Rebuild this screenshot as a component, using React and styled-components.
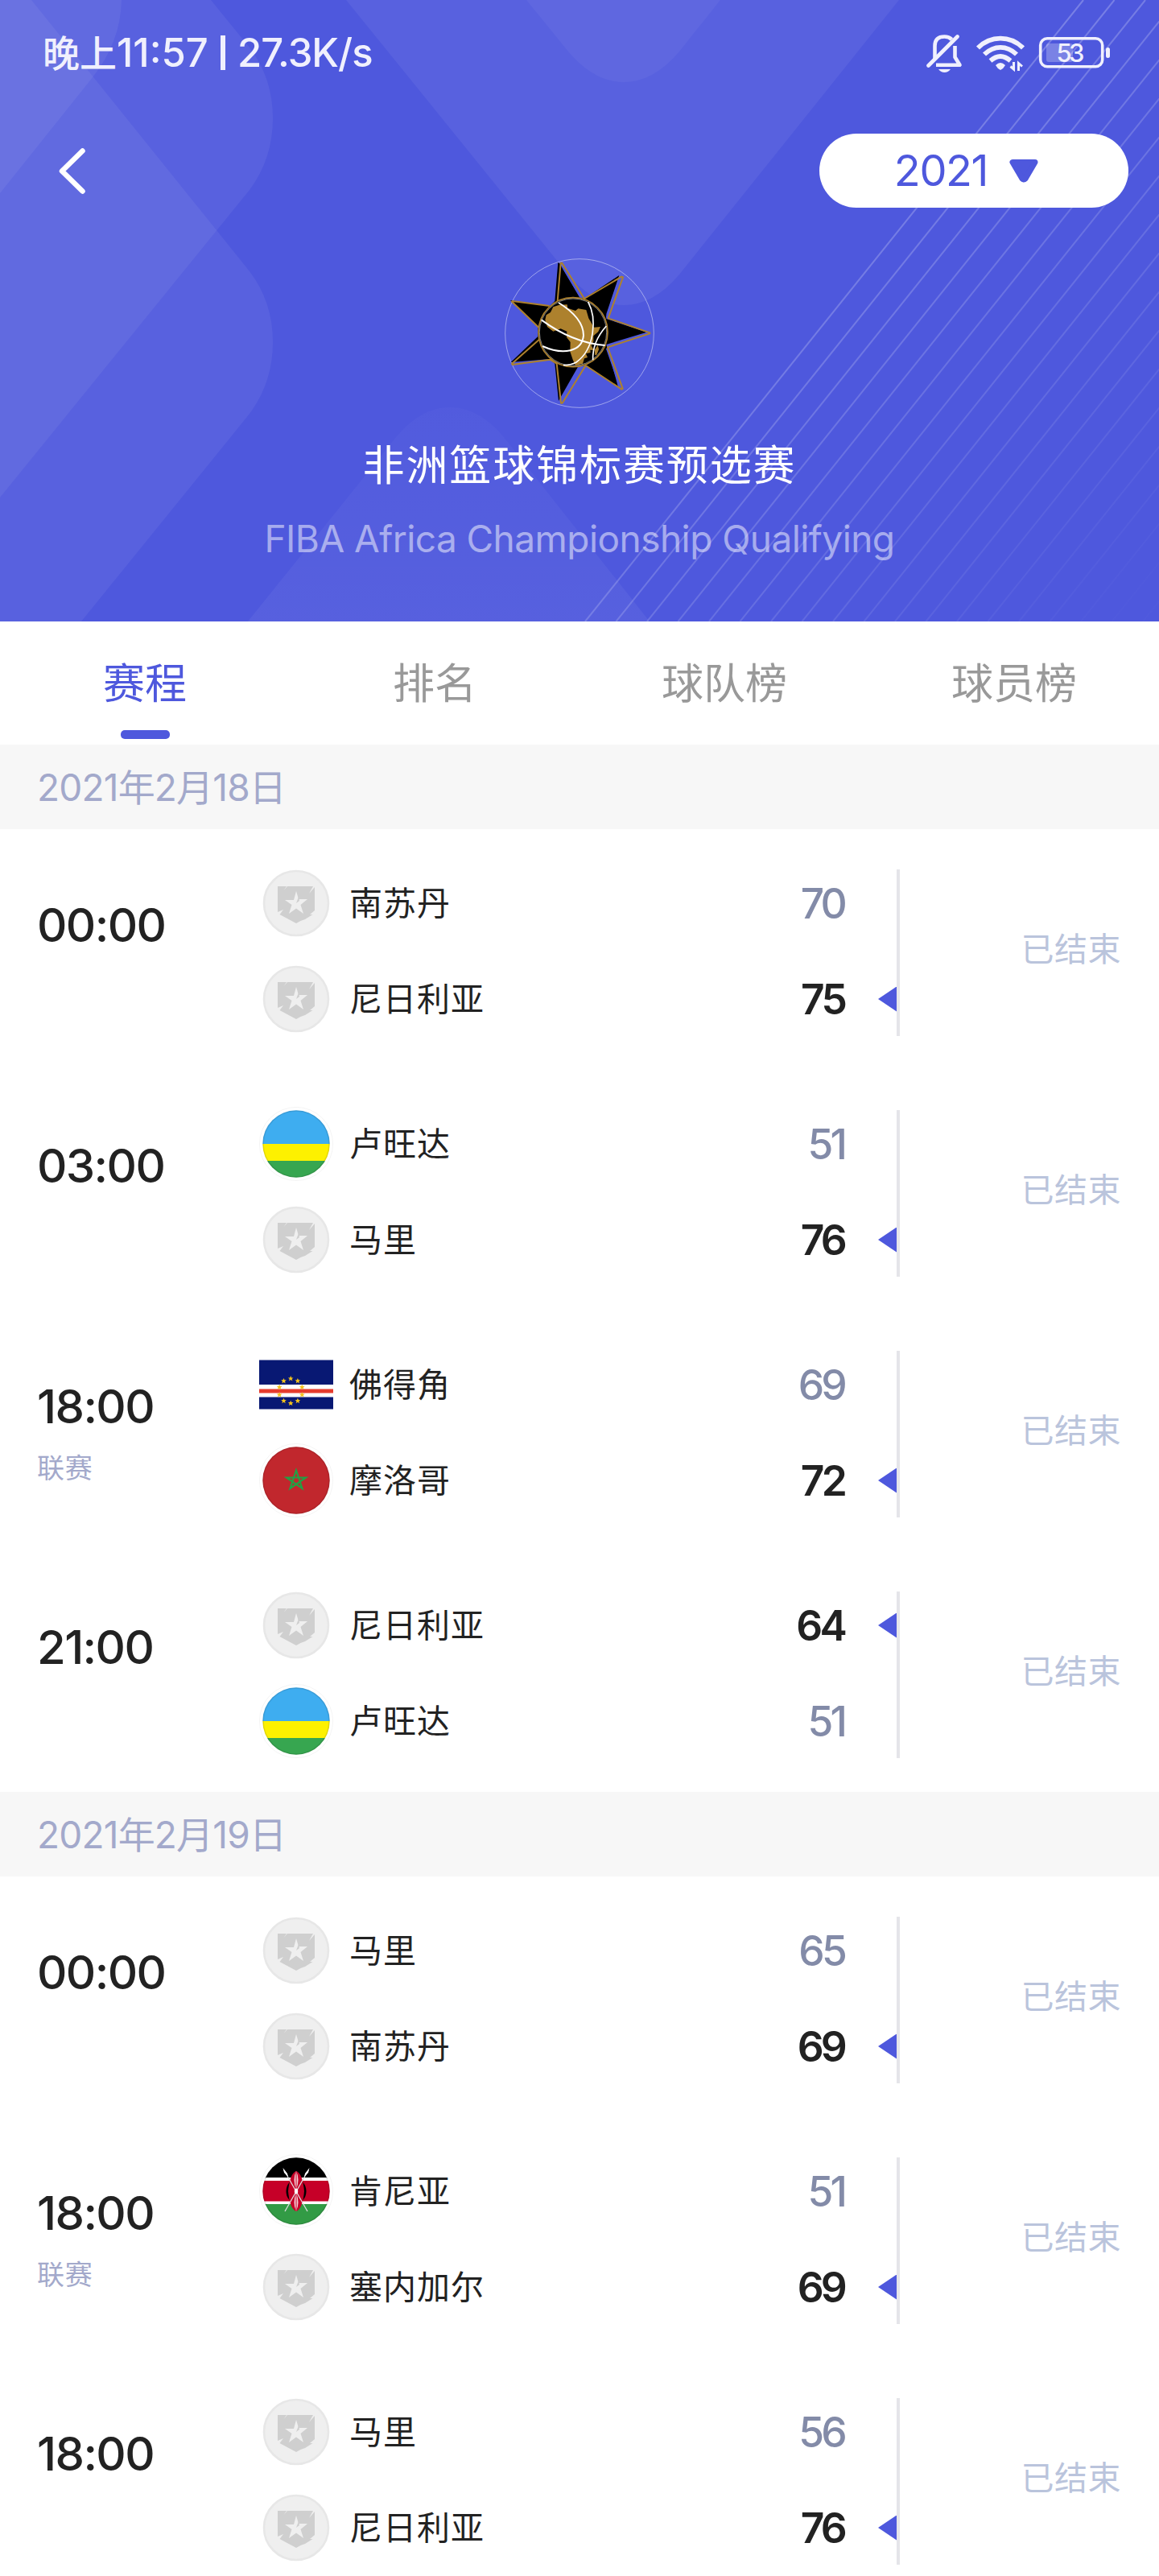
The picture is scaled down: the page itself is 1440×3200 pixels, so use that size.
import React from "react";
import styled, { createGlobalStyle } from "styled-components";

const GlobalStyle = createGlobalStyle`
  * { box-sizing: border-box; }
  body {
    margin: 0;
    background: #fff;
    font-family: Inter, "Noto Sans CJK SC", sans-serif;
    color: #222;
  }
`;

const Page = styled.div`
  width: 1440px;
  height: 3200px;
  overflow: hidden;
  background: #fff;
`;

const Header = styled.header`
  position: relative;
  height: 772px;
  background: #4e58dd;
  display: flex;
  flex-direction: column;
  overflow: hidden;
  isolation: isolate;
`;

const Backdrop = styled.svg`
  position: absolute;
  inset: 0;
  z-index: -1;
`;

const StatusBar = styled.div`
  height: 131px;
  padding: 0 61px 0 53px;
  display: flex;
  align-items: center;
  justify-content: space-between;
  color: #f0f0fd;
`;

const Clock = styled.span`
  font-size: 49px;
  font-weight: 500;
  line-height: 60px;
  white-space: nowrap;
  word-spacing: -2.5px;
`;

const CjkPart = styled.span`
  font-size: 46px;
`;

const Divider = styled.span`
  display: inline-block;
  width: 6px;
  height: 43px;
  margin: 0 4px 0 5px;
  vertical-align: -4px;
  overflow: hidden;
  background: #f0f0fd;
  color: transparent;
`;

const Speed = styled.span`
  letter-spacing: -1px;
`;

const StatusIcons = styled.div`
  display: flex;
  align-items: center;
`;

const NavBar = styled.div`
  height: 162px;
  padding: 0 38px 0 66px;
  display: flex;
  align-items: center;
  justify-content: space-between;
`;

const BackButton = styled.button`
  border: 0;
  padding: 0;
  background: none;
  display: flex;
`;

const SeasonButton = styled.button`
  width: 384px;
  height: 92px;
  border: 0;
  border-radius: 46px;
  padding: 0 18px 0 0;
  background: #fff;
  color: #4e58dd;
  display: flex;
  align-items: center;
  justify-content: center;
  gap: 26px;
  font: 400 54px/92px Inter, sans-serif;
  letter-spacing: -1.4px;
`;

const Competition = styled.div`
  display: flex;
  flex-direction: column;
  align-items: center;
  padding-top: 27px;
`;

const CompetitionName = styled.h1`
  margin: 33px 0 0;
  font-size: 52px;
  font-weight: 400;
  line-height: 76px;
  letter-spacing: 1.9px;
  color: #fff;
`;

const CompetitionSub = styled.div`
  margin-top: 19px;
  font-size: 46px;
  line-height: 66px;
  letter-spacing: -0.55px;
  color: rgba(255, 255, 255, 0.5);
  white-space: nowrap;
`;

const Tabs = styled.nav`
  height: 153px;
  display: grid;
  grid-template-columns: repeat(4, 1fr);
`;

const Tab = styled.div`
  display: flex;
  flex-direction: column;
  align-items: center;
  padding-top: 41px;
  font-size: 52px;
  line-height: 74px;
  color: ${(p) => (p.$active ? "#4e58dd" : "#999")};

  &::after {
    content: "";
    display: ${(p) => (p.$active ? "block" : "none")};
    width: 61px;
    height: 11px;
    margin-top: 20px;
    border-radius: 5px;
    background: #4e58dd;
  }
`;

const DateBar = styled.div`
  height: 105px;
  padding-left: 46px;
  display: flex;
  align-items: center;
  background: #f7f7f7;
  color: #a3a9cb;
  font-size: 46px;
  line-height: 60px;
  letter-spacing: -0.8px;
`;

const Match = styled.article`
  height: 299px;
  padding: 50px 47px 42px 46px;
  display: flex;
`;

const Kickoff = styled.div`
  width: 276px;
  padding-top: 34px;
`;

const Time = styled.div`
  font-size: 58px;
  font-weight: 500;
  line-height: 70px;
  letter-spacing: -1.6px;
`;

const Stage = styled.div`
  margin-top: 17px;
  font-size: 34px;
  line-height: 50px;
  letter-spacing: 0.8px;
  color: #a3a9cb;
`;

const Teams = styled.div`
  width: 796px;
  height: 207px;
  border-right: 4px solid #e5e5e9;
  display: flex;
  flex-direction: column;
  gap: 27px;
`;

const Team = styled.div`
  height: 92px;
  margin-top: ${(p) => (p.$first ? -4 : 0)}px;
  display: flex;
  align-items: center;
`;

const TeamName = styled.span`
  margin-left: 20px;
  flex: 1;
  font-size: 41px;
  line-height: 60px;
  letter-spacing: 1px;
`;

const Score = styled.span`
  font-size: 51.5px;
  font-weight: ${(p) => (p.$won ? 600 : 500)};
  line-height: 60px;
  letter-spacing: -3.8px;
  color: ${(p) => (p.$won ? "#222" : "#838ba8")};
`;

const Marker = styled.span`
  width: 23px;
  height: 31px;
  margin-left: 42px;
  background: ${(p) => (p.$won ? "#4e58dd" : "transparent")};
  clip-path: polygon(100% 0, 100% 100%, 0 50%);
`;

const State = styled.div`
  flex: 1;
  padding-top: 69px;
  text-align: right;
  font-size: 41px;
  line-height: 60px;
  letter-spacing: 0.5px;
  color: #bac4dc;
`;

const STRIPES = Array.from({ length: 20 }, (_, i) => 1346 + i * 38.5);

function HeaderBackdrop() {
  return (
    <Backdrop width="1440" height="772" viewBox="0 0 1440 772">
      <defs>
        <linearGradient id="fade" gradientUnits="userSpaceOnUse" x1="1010" y1="330" x2="1400" y2="740">
          <stop offset="0" stopColor="#fff" stopOpacity="0.24" />
          <stop offset="0.5" stopColor="#fff" stopOpacity="0.12" />
          <stop offset="1" stopColor="#fff" stopOpacity="0.01" />
        </linearGradient>
        <linearGradient id="rise" x1="0" y1="0" x2="0" y2="1">
          <stop offset="0" stopColor="#fff" stopOpacity="0.02" />
          <stop offset="1" stopColor="#fff" stopOpacity="0.05" />
        </linearGradient>
      </defs>
      <g fill="#fff" fillOpacity="0.06">
        <path d="M0 0H262L310 59Q339 97 339 147T310 236L0 618Z" />
        <path d="M0 -48L39 0L310 337Q339 375 339 425T310 514L101 772H0Z" />
        <path d="M0 0H151Q150 52 115 96L0 240Z" />
        <path d="M430 0H1117L844 341Q812 379 775 379T706 341Z" />
        <path d="M654 0H895L844 64Q812 102 775 102T706 64Z" fillOpacity="0.045" />
      </g>
      <path d="M308 772L489 547Q521 506 559 506T629 547L807 772Z" fill="url(#rise)" />
      <g stroke="url(#fade)" strokeWidth="2">
        {STRIPES.map((x) => (
          <path key={x} d={`M${x} 0L${x - 619} 772`} />
        ))}
      </g>
    </Backdrop>
  );
}

function StatusGlyphs() {
  return (
    <svg width="228" height="60" viewBox="1151 35 228 60" fill="none" stroke="#f0f0fd">
      <g strokeWidth="4.6">
        <path d="M1161.500 72V56Q1161.500 44.500 1173.500 44.500Q1179 44.500 1182.500 48" />
        <path d="M1186.500 56V70L1192.500 79.700H1163" strokeLinejoin="round" />
        <path d="M1153.500 80.500L1189.500 44.500" strokeLinecap="round" />
      </g>
      <path d="M1166 85H1181Q1178 89 1173.500 89T1166 85Z" fill="#f0f0fd" stroke="none" />
      <g strokeWidth="5.800">
        <path d="M1215 58.500Q1227 46.700 1243 46.700T1271 58.500" />
        <path d="M1223 66.500Q1232 57.800 1243 57.800T1263 66.500" />
        <path d="M1230.500 74.500Q1237 69 1243 69T1255.500 74.500" />
      </g>
      <path d="M1237 80Q1243 74 1249 80Q1247 84 1243 86Q1239 84 1237 80Z" fill="#f0f0fd" stroke="none" />
      <path d="M1259.500 76V85L1255.500 81.500M1265.500 87V77.500L1270 81.500" strokeWidth="3" />
      <rect x="1292.700" y="46.700" width="77" height="35" rx="8.500" strokeWidth="3.600" />
      <rect x="1300" y="53" width="33" height="23" rx="3" fill="#fff" fillOpacity="0.25" stroke="none" />
      <rect x="1374" y="58" width="5" height="13" rx="2.500" fill="#f0f0fd" stroke="none" />
      <text x="1330" y="75.500" textAnchor="middle" textLength="35" fontFamily="Inter, sans-serif" fontSize="31" fontWeight="500" fill="#f0f0fd" stroke="none">53</text>
    </svg>
  );
}

function CompetitionLogo() {
  return (
    <svg width="188" height="188" viewBox="78 60 564 564">
      <circle cx="360" cy="342" r="277" fill="none" stroke="#fff" strokeOpacity="0.45" strokeWidth="3" />
      <path
        fill="#000"
        d="M280 78L286 82L360 208L378 213L508 126L460 270V288L610 338L460 384L504 542L383 462L355 466L282 594L268 455L250 438L104 450L205 354V318L102 219L250 240L268 222Z"
      />
      <path
        fill="none"
        stroke="#4e58dd"
        strokeWidth="7"
        d="M298 96L366 208M510 140L462 284M462 398L512 542M372 468L296 590M250 446L124 458"
      />
      <path
        fill="none"
        stroke="#ad812d"
        strokeWidth="6"
        strokeLinejoin="round"
        d="M278 222L290 80H295L378 213L517 131L522 133L467 286L622 340V343L465 394L521 548L517 551L383 462L296 602H291L275 455L250 440L110 459L108 455L210 365M208 320L108 224L110 222L248 240"
      />
      <circle cx="336" cy="338" r="129" fill="#000" stroke="#ad812d" strokeWidth="5" />
      <circle cx="336" cy="338" r="125" fill="none" stroke="#fff" strokeWidth="1.500" />
      <path
        fill="#ad812d"
        d="M232 292L236 274L252 264L262 244L285 236L314 235L316 248L345 258L355 250L385 255L394 286L414 320L438 318L430 336L412 352L412 372L404 388L413 405L400 404L401 414L384 418L390 432L378 436L372 455L345 462L335 440L325 410L326 375L312 357L313 335L290 325L262 335L240 318Z"
      />
      <path fill="#ad812d" d="M428 386L432 402L424 422L418 424L416 404Z" />
      <g fill="none" stroke="#fff" strokeWidth="6">
        <path d="M282 228C350 270 375 310 375 350C370 410 300 425 222 390" />
        <path d="M218 292C290 345 370 380 455 387" />
        <path d="M392 225C425 285 418 400 348 450Q325 462 300 461" strokeWidth="5" />
        <path d="M460 315C420 360 408 400 410 442" strokeWidth="5" />
      </g>
    </svg>
  );
}

function DefaultBadge() {
  return (
    <g>
      <circle cx="46" cy="46" r="40" fill="#efefef" stroke="#e7e7e7" strokeWidth="2.600" />
      <path
        fill="#cfcfcf"
        d="M23 25H34L30.500 30L35 25H67L62 34L69 26V55L63 60L66.500 60L57 66Q50 68 46 71L25.500 60L30 54L23 57Z"
      />
      <path
        fill="#efefef"
        d="M46 31L49 41H60L51.500 48L55 59L46 52.500L37 59L40.500 48L32 42H43Z"
      />
      <path fill="#cfcfcf" d="M49 38L46 46L50 43Z" />
    </g>
  );
}

function RoundFlag({ children }) {
  return (
    <g>
      <clipPath id="disc">
        <circle cx="46" cy="46" r="41.700" />
      </clipPath>
      <circle cx="46" cy="46" r="45.600" fill="none" stroke="#f1f1f1" strokeWidth="0.800" />
      <g clipPath="url(#disc)">{children}</g>
      <circle cx="46" cy="46" r="41" fill="none" stroke="#000" strokeOpacity="0.1" strokeWidth="1.600" />
    </g>
  );
}

function Rwanda() {
  return (
    <RoundFlag>
      <rect width="92" height="46" fill="#3eadf0" />
      <rect y="46" width="92" height="21" fill="#fdf100" />
      <rect y="67" width="92" height="25" fill="#37a650" />
    </RoundFlag>
  );
}

function Morocco() {
  return (
    <RoundFlag>
      <rect width="92" height="92" fill="#c1272d" />
      <path
        d="M46 33.500L53.500 56L34 42.500H58L38.500 56Z"
        fill="none"
        stroke="#22a045"
        strokeWidth="2.200"
      />
    </RoundFlag>
  );
}

function Kenya() {
  return (
    <RoundFlag>
      <rect width="92" height="30" fill="#000" />
      <rect y="29" width="92" height="34" fill="#fff" />
      <rect y="33" width="92" height="25.500" fill="#c60028" />
      <rect y="62" width="92" height="30" fill="#329b45" />
      <ellipse cx="46" cy="46" rx="12.500" ry="15" fill="#000" />
      <path d="M46 21Q54 24 56 46Q54 68 46 71Q38 68 36 46Q38 24 46 21Z" fill="#c60028" />
      <path d="M46 21Q51 31 46 44Q41 31 46 21ZM46 48Q51 60 46 71Q41 60 46 48Z" fill="#f4cdd3" />
      <path d="M46 22V70" stroke="#c60028" strokeWidth="1" />
      <path d="M31 20L60 71M61 20L32 71" stroke="#ddd" strokeWidth="1.300" />
      <path d="M29.500 17L35 24L36 28L31 23ZM62.500 17L57 24L56 28L61 23Z" fill="#fff" />
      <ellipse cx="46" cy="46" rx="2.200" ry="3.500" fill="#fff" />
    </RoundFlag>
  );
}

const STAR_RING = Array.from({ length: 10 }, (_, i) => {
  const angle = ((i * 36 - 90) * Math.PI) / 180;
  return [39.2 + 14.8 * Math.cos(angle), 53.7 + 15.3 * Math.sin(angle)];
});

function CapeVerde() {
  return (
    <g>
      <rect y="15.500" width="92" height="61" fill="#081873" />
      <rect y="46" width="92" height="15.500" fill="#fff" />
      <rect y="51.500" width="92" height="5" fill="#e63c2e" />
      {STAR_RING.map(([x, y]) => (
        <path
          key={`${x}-${y}`}
          transform={`translate(${x} ${y})`}
          fill="#f3c21b"
          d="M0 -3.300L1 -1L3.300 -1L1.500 .7L2.200 3.100L0 1.700L-2.200 3.100L-1.500 .7L-3.300 -1L-1 -1Z"
        />
      ))}
    </g>
  );
}

const EMBLEMS = {
  卢旺达: Rwanda,
  佛得角: CapeVerde,
  摩洛哥: Morocco,
  肯尼亚: Kenya,
};

function Emblem({ team }) {
  const Art = EMBLEMS[team] || DefaultBadge;
  return (
    <svg width="92" height="92" viewBox="0 0 92 92">
      <Art />
    </svg>
  );
}

const SCHEDULE = [
  {
    date: "2021年2月18日",
    matches: [
      { time: "00:00", teams: [["南苏丹", 70], ["尼日利亚", 75]] },
      { time: "03:00", teams: [["卢旺达", 51], ["马里", 76]] },
      { time: "18:00", stage: "联赛", teams: [["佛得角", 69], ["摩洛哥", 72]] },
      { time: "21:00", teams: [["尼日利亚", 64], ["卢旺达", 51]] },
    ],
  },
  {
    date: "2021年2月19日",
    matches: [
      { time: "00:00", teams: [["马里", 65], ["南苏丹", 69]] },
      { time: "18:00", stage: "联赛", teams: [["肯尼亚", 51], ["塞内加尔", 69]] },
      { time: "18:00", teams: [["马里", 56], ["尼日利亚", 76]] },
    ],
  },
];

function MatchRow({ match }) {
  const best = Math.max(...match.teams.map(([, score]) => score));
  return (
    <Match>
      <Kickoff>
        <Time>{match.time}</Time>
        {match.stage && <Stage>{match.stage}</Stage>}
      </Kickoff>
      <Teams>
        {match.teams.map(([name, score], i) => (
          <Team key={name} $first={i === 0}>
            <Emblem team={name} />
            <TeamName>{name}</TeamName>
            <Score $won={score === best}>{score}</Score>
            <Marker $won={score === best} />
          </Team>
        ))}
      </Teams>
      <State>已结束</State>
    </Match>
  );
}

export default function App() {
  return (
    <Page>
      <GlobalStyle />
      <Header>
        <HeaderBackdrop />
        <StatusBar>
          <Clock>
            <CjkPart>晚上</CjkPart>11:57 <Divider /> <Speed>27.3K/s</Speed>
          </Clock>
          <StatusIcons>
            <StatusGlyphs />
          </StatusIcons>
        </StatusBar>
        <NavBar>
          <BackButton aria-label="返回">
            <svg width="48" height="64" viewBox="66 180 48 64" fill="none">
              <path d="M102.500 187.500L77 212.500L102.500 237.500" stroke="#fff" strokeWidth="6.500" strokeLinecap="round" strokeLinejoin="round" />
            </svg>
          </BackButton>
          <SeasonButton>
            2021
            <svg width="38" height="31" viewBox="0 0 38 31">
              <path d="M5 4.500H33L21 25Q19 27 17 25Z" fill="#4e58dd" stroke="#4e58dd" strokeWidth="7" strokeLinejoin="round" />
            </svg>
          </SeasonButton>
        </NavBar>
        <Competition>
          <CompetitionLogo />
          <CompetitionName>非洲篮球锦标赛预选赛</CompetitionName>
          <CompetitionSub>FIBA Africa Championship Qualifying</CompetitionSub>
        </Competition>
      </Header>
      <Tabs>
        <Tab $active>赛程</Tab>
        <Tab>排名</Tab>
        <Tab>球队榜</Tab>
        <Tab>球员榜</Tab>
      </Tabs>
      {SCHEDULE.map((day) => (
        <section key={day.date}>
          <DateBar>{day.date}</DateBar>
          {day.matches.map((match, i) => (
            <MatchRow key={i} match={match} />
          ))}
        </section>
      ))}
    </Page>
  );
}
